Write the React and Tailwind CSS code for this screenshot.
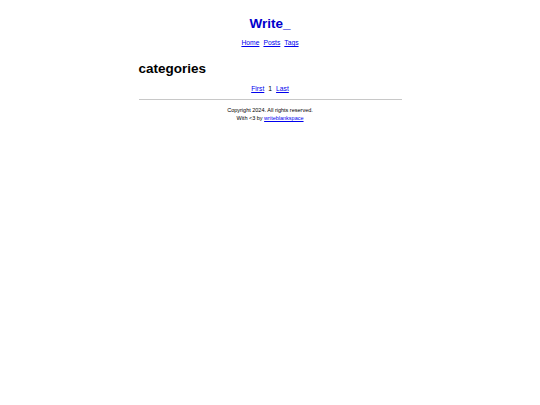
import React from 'react'

export default function App() {
  return (
    <div className="min-h-[405px] bg-white text-black" style={{ fontFamily: '"Liberation Sans", Arial, sans-serif' }}>
      <div className="mx-auto w-[263px] pt-[15px]">
        <header className="text-center">
          <h1 className="text-[13.5px] font-bold leading-[18px] text-[#0000cc]">Write_</h1>
          <nav className="mt-[5px] flex justify-center gap-[4px] text-[6.75px] leading-[9px]">
            <a href="#" className="text-[#0000ee] underline">Home</a>
            <a href="#" className="text-[#0000ee] underline">Posts</a>
            <a href="#" className="text-[#0000ee] underline">Tags</a>
          </nav>
        </header>

        <main className="mt-[13px]">
          <h2 className="text-[13.5px] font-bold leading-[18px]">categories</h2>
          <div className="mt-[6px] flex justify-center gap-[4px] text-[6.75px] leading-[9px]">
            <a href="#" className="text-[#0000ee] underline">First</a>
            <span>1</span>
            <a href="#" className="text-[#0000ee] underline">Last</a>
          </div>
        </main>

        <hr className="mt-[6px] border-t border-[#c8c8c8]" />

        <footer className="mt-[6px] text-center text-[5.5px] leading-[8px]">
          <p>Copyright 2024. All rights reserved.</p>
          <p>
            With &lt;3 by <a href="#" className="text-[#0000ee] underline">writeblankspace</a>
          </p>
        </footer>
      </div>
    </div>
  )
}
